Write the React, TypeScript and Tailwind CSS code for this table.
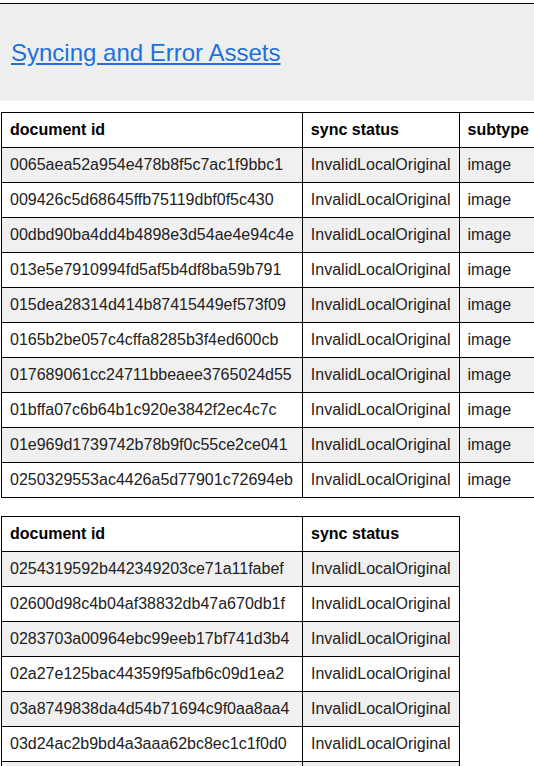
import React from "react";

const t1: string[] = [
  "0065aea52a954e478b8f5c7ac1f9bbc1",
  "009426c5d68645ffb75119dbf0f5c430",
  "00dbd90ba4dd4b4898e3d54ae4e94c4e",
  "013e5e7910994fd5af5b4df8ba59b791",
  "015dea28314d414b87415449ef573f09",
  "0165b2be057c4cffa8285b3f4ed600cb",
  "017689061cc24711bbeaee3765024d55",
  "01bffa07c6b64b1c920e3842f2ec4c7c",
  "01e969d1739742b78b9f0c55ce2ce041",
  "0250329553ac4426a5d77901c72694eb",
];

const t2: string[] = [
  "0254319592b442349203ce71a11fabef",
  "02600d98c4b04af38832db47a670db1f",
  "0283703a00964ebc99eeb17bf741d3b4",
  "02a27e125bac44359f95afb6c09d1ea2",
  "03a8749838da4d54b71694c9f0aa8aa4",
  "03d24ac2b9bd4a3aaa62bc8ec1c1f0d0",
  "03e1f6c2a7b84d1e9c0f5a6b7d8e9f01",
];

const cell = "border border-black px-2 py-2 leading-[18px] text-left whitespace-nowrap";

export default function App() {
  return (
    <div className="w-[534px] h-[766px] overflow-hidden bg-white text-[16px] text-[#222]" style={{ fontFamily: '"Liberation Sans", Arial, sans-serif' }}>
      <div className="h-[3px]" />
      <div className="border-t border-black bg-[#eeeeee] h-[98px] flex items-center pl-[11px]">
        <a href="#" className="text-[24px] text-[#1f6fdc] underline leading-[28px]">Syncing and Error Assets</a>
      </div>
      <div className="pl-[1px] pt-[11px]">
        <table className="border-collapse">
          <thead>
            <tr>
              <th className={`${cell} font-bold text-black w-[301px]`}>document id</th>
              <th className={`${cell} font-bold text-black w-[157px]`}>sync status</th>
              <th className={`${cell} font-bold text-black w-[90px]`}>subtype</th>
            </tr>
          </thead>
          <tbody>
            {t1.map((id, i) => (
              <tr key={id} className={i % 2 === 0 ? "bg-[#f0f0f0]" : "bg-white"}>
                <td className={cell}>{id}</td>
                <td className={cell}>InvalidLocalOriginal</td>
                <td className={cell}>image</td>
              </tr>
            ))}
          </tbody>
        </table>
        <table className="border-collapse mt-[18px]">
          <thead>
            <tr>
              <th className={`${cell} font-bold text-black w-[301px]`}>document id</th>
              <th className={`${cell} font-bold text-black w-[157px]`}>sync status</th>
            </tr>
          </thead>
          <tbody>
            {t2.map((id, i) => (
              <tr key={id} className={i % 2 === 0 ? "bg-[#f0f0f0]" : "bg-white"}>
                <td className={cell}>{id}</td>
                <td className={cell}>InvalidLocalOriginal</td>
              </tr>
            ))}
          </tbody>
        </table>
      </div>
    </div>
  );
}
